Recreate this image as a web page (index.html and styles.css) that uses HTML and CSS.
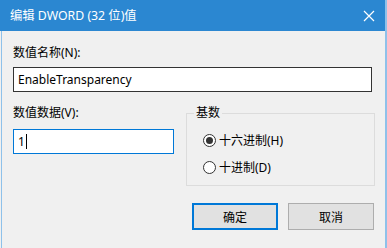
FILE: index.html
```html
<!DOCTYPE html>
<html>
<head>
<meta charset="utf-8">
<link rel="stylesheet" href="styles.css">
</head>
<body>
<div class="window">
  <div class="titlebar">
    <span class="title">编辑 DWORD (32 位)值</span>
    <svg class="close" width="12" height="12" viewBox="0 0 12 12"><path d="M1 1L11 11M11 1L1 11" stroke="#fff" stroke-width="1.2" fill="none"/></svg>
  </div>
  <div class="content">
    <div class="label first">数值名称(N):</div>
    <div class="field name">EnableTransparency</div>
    <div class="row">
      <div class="col">
        <div class="label second">数值数据(V):</div>
        <div class="field data focused"><span>1</span><span class="caret"></span></div>
      </div>
      <fieldset class="group">
        <legend>基数</legend>
        <div class="radio"><span class="dot checked"></span><span>十六进制(H)</span></div>
        <div class="radio"><span class="dot"></span><span>十进制(D)</span></div>
      </fieldset>
    </div>
    <div class="buttons">
      <div class="btn primary">确定</div>
      <div class="btn">取消</div>
    </div>
  </div>
</div>
</body>
</html>
```
FILE: styles.css
```css
html, body {
  margin: 0;
  padding: 0;
}
body {
  width: 387px;
  height: 248px;
  overflow: hidden;
  background: #f0f0f0;
  font-family: "Noto Sans", "Noto Sans CJK SC", sans-serif;
  font-size: 12px;
  color: #000;
}
.window {
  width: 385px;
  height: 248px;
  display: flex;
  flex-direction: column;
  border-right: 2px solid #8ec1ea;
}
.titlebar {
  height: 31px;
  flex: none;
  background: #2b87d1;
  display: flex;
  align-items: center;
  justify-content: space-between;
  padding: 0 10px 0 10px;
  color: #fff;
}
.title {
  font-size: 12.3px;
  line-height: 16px;
}
.close {
  display: block;
}
.content {
  flex: 1;
  margin-left: 1px;
  border-left: 1px solid #8ec1ea;
  padding: 13px 10px 0 11px;
}
.label {
  line-height: 16px;
  height: 16px;
}
.first {
  margin-top: 1px;
}
.field {
  background: #fff;
  border: 1px solid #333;
  height: 23px;
  line-height: 23px;
  padding-left: 4px;
  box-sizing: content-box;
}
.name {
  margin-top: 6px;
  margin-right: 3px;
}
.row {
  display: flex;
  justify-content: space-between;
  align-items: flex-start;
  margin-top: 7px;
}
.col {
  width: 161px;
}
.second {
  margin-top: 6px;
}
.data {
  margin-top: 8px;
  border-color: #0078d7;
  display: flex;
  align-items: center;
}
.caret {
  display: inline-block;
  width: 1px;
  height: 15px;
  background: #000;
  margin-left: 1px;
}
.group {
  margin: 7px 0 0 0;
  width: 189px;
  height: 80px;
  box-sizing: border-box;
  border: 1px solid #dcdcdc;
  padding: 12px 0 0 16px;
}
.group legend {
  padding: 0 2px;
  margin-left: -9px;
  line-height: 14px;
}
.radio {
  display: flex;
  align-items: center;
  height: 16px;
  margin-bottom: 11px;
}
.dot {
  width: 13px;
  height: 13px;
  box-sizing: border-box;
  border: 1px solid #333;
  border-radius: 50%;
  background: #fff;
  margin-right: 3px;
  position: relative;
}
.dot.checked::after {
  content: "";
  position: absolute;
  left: 2px;
  top: 2px;
  width: 7px;
  height: 7px;
  border-radius: 50%;
  background: #333;
}
.buttons {
  display: flex;
  justify-content: flex-end;
  gap: 10px;
  margin-top: 17px;
  padding-right: 1px;
}
.btn {
  width: 86px;
  height: 27px;
  box-sizing: border-box;
  background: #e1e1e1;
  border: 1px solid #adadad;
  display: flex;
  align-items: center;
  justify-content: center;
}
.btn.primary {
  border: 2px solid #0078d7;
}
```
